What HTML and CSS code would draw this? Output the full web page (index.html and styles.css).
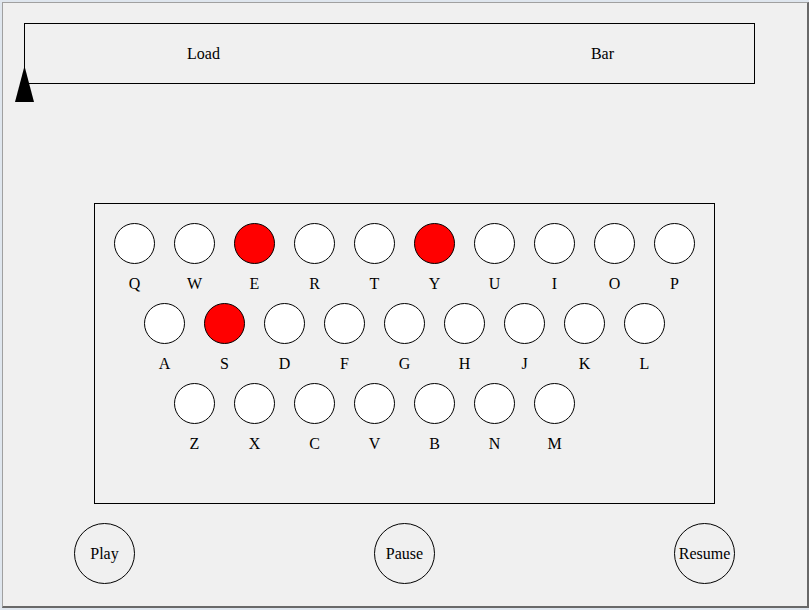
FILE: index.html
```html
<!DOCTYPE html>
<html>
<head>
<meta charset="utf-8">
<link rel="stylesheet" href="styles.css">
</head>
<body>
<div class="frame">
  <div class="client">
    <div class="bar">
      <span class="bar-load">Load</span>
      <span class="bar-bar">Bar</span>
      <svg class="pointer" width="19" height="36" viewBox="0 0 19 36"><polygon points="9.5,0 0,36 19,36" fill="#000"/></svg>
    </div>
    <div class="keyboard">
      <div class="row">
        <div class="key"><div class="dot"></div><div class="label">Q</div></div>
        <div class="key"><div class="dot"></div><div class="label">W</div></div>
        <div class="key"><div class="dot on"></div><div class="label">E</div></div>
        <div class="key"><div class="dot"></div><div class="label">R</div></div>
        <div class="key"><div class="dot"></div><div class="label">T</div></div>
        <div class="key"><div class="dot on"></div><div class="label">Y</div></div>
        <div class="key"><div class="dot"></div><div class="label">U</div></div>
        <div class="key"><div class="dot"></div><div class="label">I</div></div>
        <div class="key"><div class="dot"></div><div class="label">O</div></div>
        <div class="key"><div class="dot"></div><div class="label">P</div></div>
      </div>
      <div class="row row2">
        <div class="key"><div class="dot"></div><div class="label">A</div></div>
        <div class="key"><div class="dot on"></div><div class="label">S</div></div>
        <div class="key"><div class="dot"></div><div class="label">D</div></div>
        <div class="key"><div class="dot"></div><div class="label">F</div></div>
        <div class="key"><div class="dot"></div><div class="label">G</div></div>
        <div class="key"><div class="dot"></div><div class="label">H</div></div>
        <div class="key"><div class="dot"></div><div class="label">J</div></div>
        <div class="key"><div class="dot"></div><div class="label">K</div></div>
        <div class="key"><div class="dot"></div><div class="label">L</div></div>
      </div>
      <div class="row row3">
        <div class="key"><div class="dot"></div><div class="label">Z</div></div>
        <div class="key"><div class="dot"></div><div class="label">X</div></div>
        <div class="key"><div class="dot"></div><div class="label">C</div></div>
        <div class="key"><div class="dot"></div><div class="label">V</div></div>
        <div class="key"><div class="dot"></div><div class="label">B</div></div>
        <div class="key"><div class="dot"></div><div class="label">N</div></div>
        <div class="key"><div class="dot"></div><div class="label">M</div></div>
      </div>
    </div>
    <div class="controls">
      <div class="btn">Play</div>
      <div class="btn">Pause</div>
      <div class="btn">Resume</div>
    </div>
  </div>
</div>
</body>
</html>
```

FILE: styles.css
```css
html, body {
  margin: 0;
  padding: 0;
}
body {
  width: 809px;
  height: 610px;
  overflow: hidden;
  font-family: "Liberation Serif", "Times New Roman", serif;
  font-size: 16px;
  color: #000;
}
.frame {
  box-sizing: border-box;
  width: 809px;
  height: 610px;
  padding: 2px 0 2px 2px;
  background: #dfe6ee;
}
.client {
  box-sizing: border-box;
  width: 807px;
  height: 606px;
  background: #f0f0f0;
  border-left: 1px solid #a0a0a0;
  border-top: 1px solid #a0a0a0;
  border-right: 2px solid #696969;
  border-bottom: 2px solid #696969;
  padding-top: 20px;
}
.bar {
  position: relative;
  box-sizing: border-box;
  width: 731px;
  height: 61px;
  margin-left: 21px;
  border: 1px solid #000;
  display: flex;
  align-items: center;
  line-height: 16px;
}
.bar-load {
  margin-left: 162px;
}
.bar-bar {
  margin-left: 371px;
}
.pointer {
  position: absolute;
  left: -10px;
  top: 42px;
  display: block;
}
.keyboard {
  box-sizing: border-box;
  width: 621px;
  height: 301px;
  margin-top: 119px;
  margin-left: 91px;
  border: 1px solid #000;
  padding: 19px 0 0 19px;
}
.row {
  display: flex;
  gap: 19px;
}
.row2 {
  padding-left: 30px;
}
.row3 {
  padding-left: 60px;
}
.key {
  width: 41px;
  display: flex;
  flex-direction: column;
  align-items: center;
}
.dot {
  box-sizing: border-box;
  width: 41px;
  height: 41px;
  border: 1px solid #000;
  border-radius: 50%;
  background: #fff;
}
.dot.on {
  background: #ff0000;
}
.label {
  height: 39px;
  line-height: 39px;
  text-align: center;
}
.controls {
  display: flex;
  gap: 239px;
  margin-top: 19px;
  margin-left: 71px;
}
.btn {
  box-sizing: border-box;
  width: 61px;
  height: 61px;
  border: 1px solid #000;
  border-radius: 50%;
  display: flex;
  align-items: center;
  justify-content: center;
  line-height: 16px;
}
```
